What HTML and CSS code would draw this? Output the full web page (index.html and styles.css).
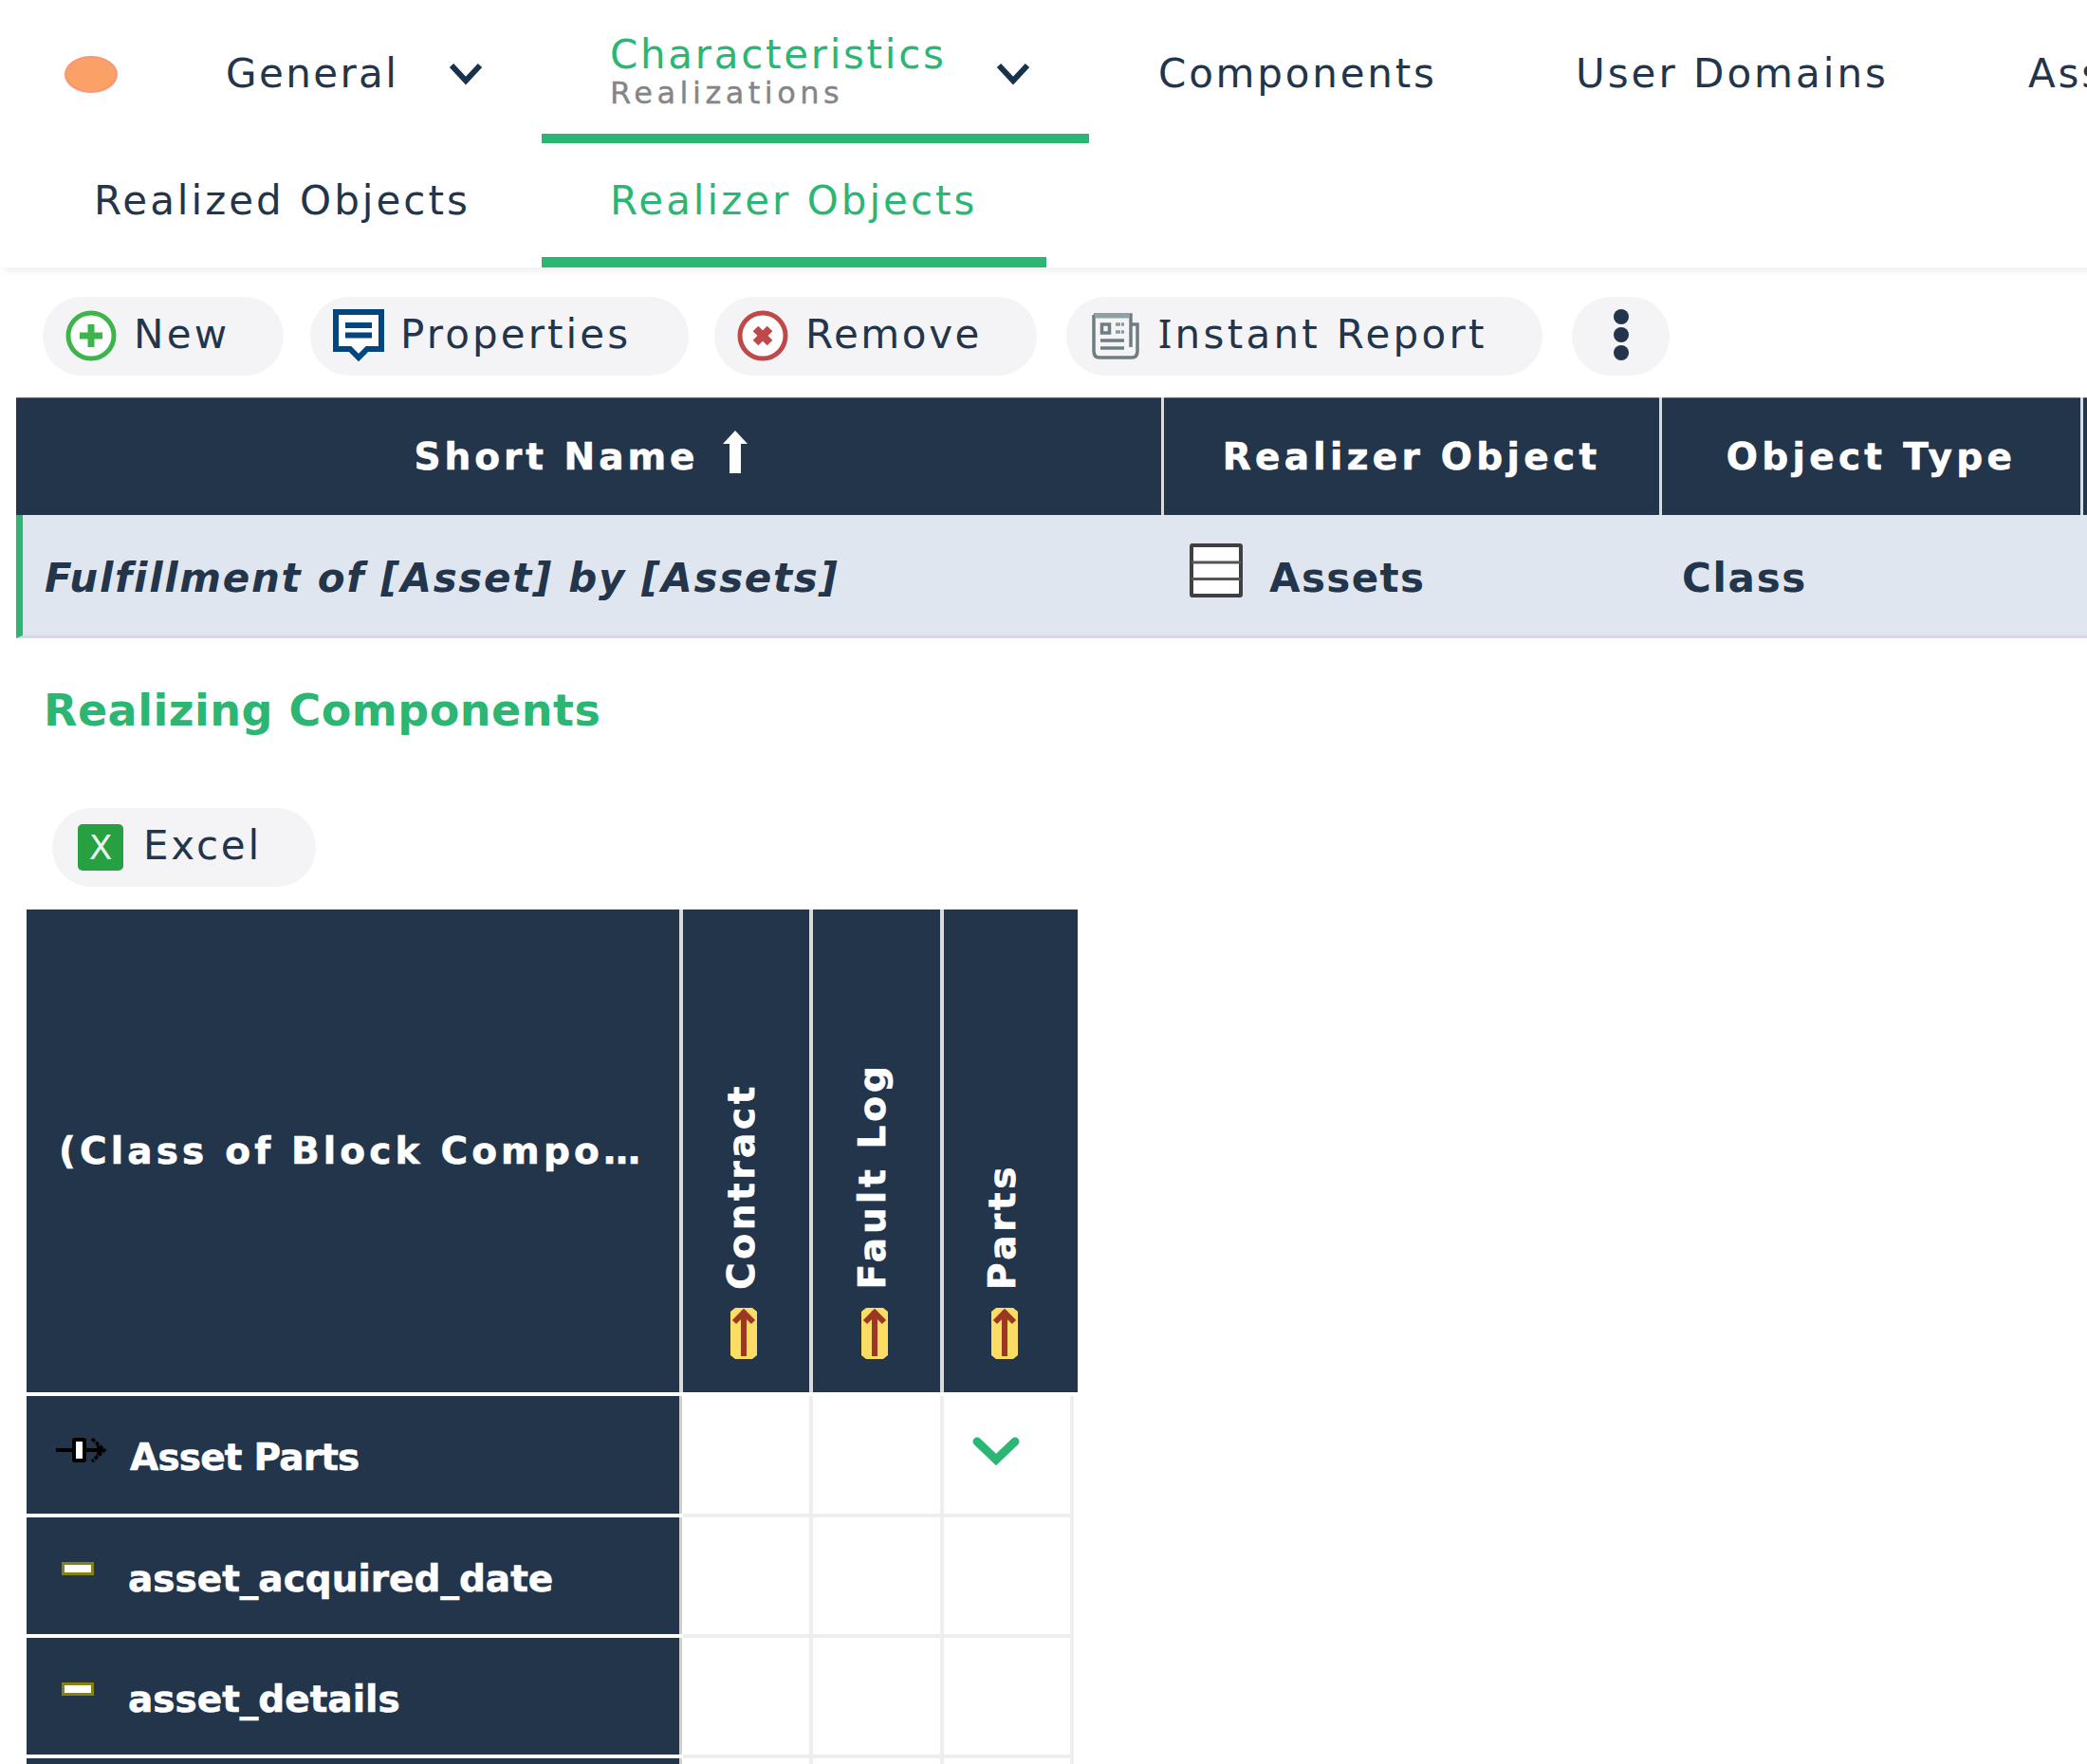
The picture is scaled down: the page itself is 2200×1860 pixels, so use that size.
FILE: index.html
```html
<!DOCTYPE html>
<html lang="en">
<head>
<meta charset="utf-8">
<title>Realizer Objects</title>
<link rel="stylesheet" href="styles.css">
</head>
<body>
<header class="header">
  <nav class="nav">
    <span class="status"></span>
    <a class="tab general">General
      <svg class="chev" width="36" height="24" viewBox="0 0 36 24"><path d="M3 3 18 19 33 3"/></svg>
    </a>
    <a class="tab current">
      <span class="stack"><span class="title">Characteristics</span><span class="sub">Realizations</span></span>
      <svg class="chev" width="36" height="24" viewBox="0 0 36 24"><path d="M3 3 18 19 33 3"/></svg>
    </a>
    <a class="tab components">Components</a>
    <a class="tab domains">User Domains</a>
    <a class="tab">Ass</a>
  </nav>
  <nav class="subnav">
    <a class="subtab">Realized Objects</a>
    <a class="subtab active">Realizer Objects</a>
  </nav>
</header>
<div class="toolbar">
  <button class="btn new">
    <svg width="54" height="54" viewBox="0 0 54 54"><circle cx="27" cy="27" r="24" fill="#fff" stroke="#3db54a" stroke-width="5"/><path d="M27 15v24M15 27h24" stroke="#3db54a" stroke-width="7"/></svg>
    <span>New</span></button>
  <button class="btn props">
    <svg width="54" height="56" viewBox="0 0 54 56"><path d="M3 3h48v39H36l-9 9-9-9H3z" fill="#fff" stroke="#03467f" stroke-width="6"/><path d="M13 17h28M13 27.500h28" stroke="#03467f" stroke-width="6"/></svg>
    <span>Properties</span></button>
  <button class="btn remove">
    <svg width="54" height="54" viewBox="0 0 54 54"><circle cx="27" cy="27" r="24" fill="#fff" stroke="#bf4848" stroke-width="5"/><path d="M19.500 19.500l15 15M34.500 19.500l-15 15" stroke="#bf4848" stroke-width="8"/></svg>
    <span>Remove</span></button>
  <button class="btn report">
    <svg width="50" height="50" viewBox="0 0 50 50" fill="none" stroke="#6d7d83" stroke-width="3.500"><path d="M2 3v38q0 7 6 7h34q6 0 6-7V13h-7v24M2 3h39v10"/><path d="M3 4h37" stroke="#929fa5" stroke-width="5"/><rect x="10.500" y="13" width="8" height="9"/><path d="M25 13h9M25 21h9" stroke="#8b989e" stroke-dasharray="5 1"/><path d="M9 30h25M9 38h25"/></svg>
    <span><span class="cap-i">I</span>nstant Report</span></button>
  <button class="btn more"><svg width="20" height="58" viewBox="0 0 20 58" fill="#22354b"><circle cx="10" cy="9" r="8"/><circle cx="10" cy="28" r="8"/><circle cx="10" cy="47" r="8"/></svg></button>
</div>
<div class="grid">
  <div class="th short"><span>Short Name</span><svg width="26" height="46" viewBox="0 0 26 46"><path d="M13 0 26 14H19V45H7V14H0z" fill="#fff"/></svg></div>
  <div class="th"><span>Realizer Object</span></div>
  <div class="th"><span>Object Type</span></div>
  <div class="th"></div>
  <div class="td first">Fulfillment of [Asset] by [Assets]</div>
  <div class="td obj"><svg width="56" height="57" viewBox="0 0 56 57"><rect x="2" y="2" width="52" height="53" rx="1" fill="#fff" stroke="#3f3f3f" stroke-width="4"/><path d="M2 20h52M2 37.500h52" stroke="#555" stroke-width="3"/></svg><span>Assets</span></div>
  <div class="td type">Class</div>
  <div class="td"></div>
</div>
<h2 class="heading">Realizing Components</h2>
<button class="btn excel"><span class="xl">X</span><span>Excel</span></button>
<div class="matrix">
  <div class="mh corner">(Class of Block Compo…</div>
  <div class="mh col"><span class="v">Contract</span><svg width="28" height="54" viewBox="0 0 28 54"><path d="M5 0h18l5 4v46l-5 4H5l-5-4V4z" fill="#fbdd66"/><path d="M14 51V3M4 15 14 5l10 10" fill="none" stroke="#9c3822" stroke-width="6"/></svg></div>
  <div class="mh col"><span class="v fault">Fault Log</span><svg width="28" height="54" viewBox="0 0 28 54"><path d="M5 0h18l5 4v46l-5 4H5l-5-4V4z" fill="#fbdd66"/><path d="M14 51V3M4 15 14 5l10 10" fill="none" stroke="#9c3822" stroke-width="6"/></svg></div>
  <div class="mh col last"><span class="v">Parts</span><svg width="28" height="54" viewBox="0 0 28 54"><path d="M5 0h18l5 4v46l-5 4H5l-5-4V4z" fill="#fbdd66"/><path d="M14 51V3M4 15 14 5l10 10" fill="none" stroke="#9c3822" stroke-width="6"/></svg></div>

  <div class="rh"><svg class="port" width="54" height="26" viewBox="0 0 54 26"><path d="M0 13h50" stroke="#000" stroke-width="4"/><path d="M52 13l-9-6v12z"/><path d="M38 1l13 12-13 12" fill="none" stroke="#000" stroke-width="3.500" stroke-dasharray="4 1.500"/><rect x="19" y="2" width="11" height="22" rx="1" fill="#fff" stroke="#000" stroke-width="4"/></svg><span class="ap">Asset Parts</span></div>
  <div class="c"></div><div class="c"></div><div class="c"><svg width="50" height="32" viewBox="0 0 50 32"><path d="M5 5 25 24 45 5" fill="none" stroke="#2bb673" stroke-width="9" stroke-linecap="round"/></svg></div><div></div>
  <div class="rh"><i class="bar"></i><span>asset_acquired_date</span></div>
  <div class="c"></div><div class="c"></div><div class="c"></div><div></div>
  <div class="rh"><i class="bar"></i><span>asset_details</span></div>
  <div class="c"></div><div class="c"></div><div class="c"></div><div></div>
  <div class="rh"></div>
  <div class="c"></div><div class="c"></div><div class="c"></div><div></div>
</div>
</body>
</html>
```
FILE: styles.css
```css
* { box-sizing: border-box; }
body {
  margin: 0;
  width: 2200px;
  height: 1860px;
  overflow: hidden;
  background: #fff;
  color: #22354b;
  font-family: "DejaVu Sans", Verdana, sans-serif;
  font-size: 42px;
  line-height: 50px;
  white-space: nowrap;
}
svg { display: block; flex: none; }
.header { height: 282px; box-shadow: 4px 5px 6px #f3f3f3; }
.nav { display: flex; height: 151px; overflow: hidden; }
.status { width: 56px; height: 39px; margin: 59px 114px 0 68px; border-radius: 50%; background: #f9a167; border: 2px solid #fb9576; flex: none; }
.tab { display: flex; flex: none; padding-top: 53px; letter-spacing: 2.8px; }
.chev { fill: none; stroke: #17324d; stroke-width: 6; margin-top: 13px; }
.general { width: 333px; justify-content: space-between; padding-right: 62px; letter-spacing: 2.4px; }
.current { width: 577px; padding: 33px 62px 0 72px; border-bottom: 10px solid #2bb673; justify-content: space-between; }
.current .chev { margin-top: 33px; }
.stack { display: flex; flex-direction: column; }
.title { color: #2bb673; line-height: 50px; letter-spacing: 2.7px; }
.sub { color: #858588; font-size: 32px; letter-spacing: 4.5px; line-height: 36px; margin-top: -3px; -webkit-text-stroke: .4px #858588; }
.components { margin-left: 73px; width: 440px; letter-spacing: 2.8px; }
.domains { width: 477px; letter-spacing: 3px; }
.subnav { display: flex; height: 131px; }
.subtab { width: 571px; padding: 36px 0 0 99px; letter-spacing: 3px; }
.active { width: 532px; padding-left: 72px; color: #2bb673; border-bottom: 11px solid #2bb673; }
.toolbar { display: flex; height: 137px; padding: 31px 0 0 45px; }
.btn { display: flex; align-items: center; height: 83px; padding: 0; border: 0; border-radius: 41px; background: #f4f4f7; color: inherit; font: inherit; letter-spacing: 3.1px; }
.btn > span { margin-top: -3px; }
.btn > svg { margin-top: -1px; }
.new { width: 254px; padding-left: 24px; gap: 18px; margin-right: 28px; letter-spacing: 3.3px; }
.props { width: 399px; padding-left: 24px; gap: 17px; margin-right: 27px; }
.remove { width: 340px; padding-left: 24px; gap: 18px; margin-right: 31px; letter-spacing: 2.6px; }
.report { width: 502px; padding-left: 27px; gap: 20px; margin-right: 31px; letter-spacing: 3.3px; }
.cap-i { font-family: "Noto Sans", sans-serif; line-height: 1; }
.more { width: 103px; justify-content: center; }
.grid { display: grid; grid-template-columns: 1207px 522px 441px 10px; grid-template-rows: 124px 130px; column-gap: 3px; margin-left: 17px; background: linear-gradient(#dcdcdc 124px, #e0e6f0 124px); }
.th { display: flex; align-items: center; justify-content: center; background: #22354b; color: #fff; font-weight: bold; font-size: 39px; letter-spacing: 4.3px; border-top: 1px solid #5d6b7b; -webkit-text-stroke: .6px #fff; }
.short { letter-spacing: 4px; gap: 25px; padding-right: 17px; }
.short svg { margin-top: -10px; }
.td { display: flex; align-items: center; padding-top: 7px; font-weight: bold; letter-spacing: 1.7px; background: #e0e6f0; border-bottom: 3px solid #d5dae6; margin-right: -3px; }
.first { font-style: italic; padding-left: 23px; border-left: 7px solid #2bb673; }
.obj { padding-left: 27px; gap: 28px; letter-spacing: 1.4px; }
.obj svg { margin-top: -18px; }
.type { padding-left: 21px; }
.heading { margin: 0; padding: 51px 0 0 46px; height: 179px; font-size: 46px; line-height: 50px; letter-spacing: .5px; color: #2bb673; }
.excel { width: 278px; margin-left: 55px; padding-left: 28px; gap: 21px; letter-spacing: 2.7px; }
.btn > .xl { width: 48px; height: 49px; margin-top: 0; margin-left: -1px; border-radius: 5px; background: #26a041; color: #e9f5eb; font-size: 36px; line-height: 49px; text-align: center; letter-spacing: 0; }
.matrix { display: grid; grid-template-columns: 687.5px 133.5px 133.5px 133.5px 3.5px; grid-template-rows: 509px 124px 123px 123px 10px; gap: 4px; margin: 24px 0 0 28px; width: 1107px; }
.mh, .rh { background: #22354b; color: #fff; font-weight: bold; font-size: 39px; -webkit-text-stroke: .6px #fff; }
.mh { box-shadow: 4px 0 0 #dadada; }
.corner { padding: 230px 0 0 34px; letter-spacing: 4.15px; }
.col { display: flex; flex-direction: column; justify-content: flex-end; align-items: center; padding: 0 4px 35px 0; }
.last { grid-column: span 2; padding-right: 12px; box-shadow: none; }
.v { writing-mode: vertical-rl; transform: rotate(180deg); margin: 0 4px 19px 0; letter-spacing: 3.6px; line-height: 40px; }
.fault { letter-spacing: 4px; }
.rh { display: flex; padding: 40px 0 0 31px; box-shadow: 3px 0 0 #d0d0d0; }
.rh span { line-height: 50px; margin-left: 24px; }
.rh .ap { letter-spacing: -.8px; }
.port { margin-top: 4px; }
.bar { width: 34px; height: 14px; margin: 7px 12px 0 6px; background: #fff; border: 3px solid #86820b; }
.c { box-shadow: 0 4px 0 #eee, 4px 0 0 #eee, 4px 4px 0 #eee; padding: 43px 0 0 30px; }
```
